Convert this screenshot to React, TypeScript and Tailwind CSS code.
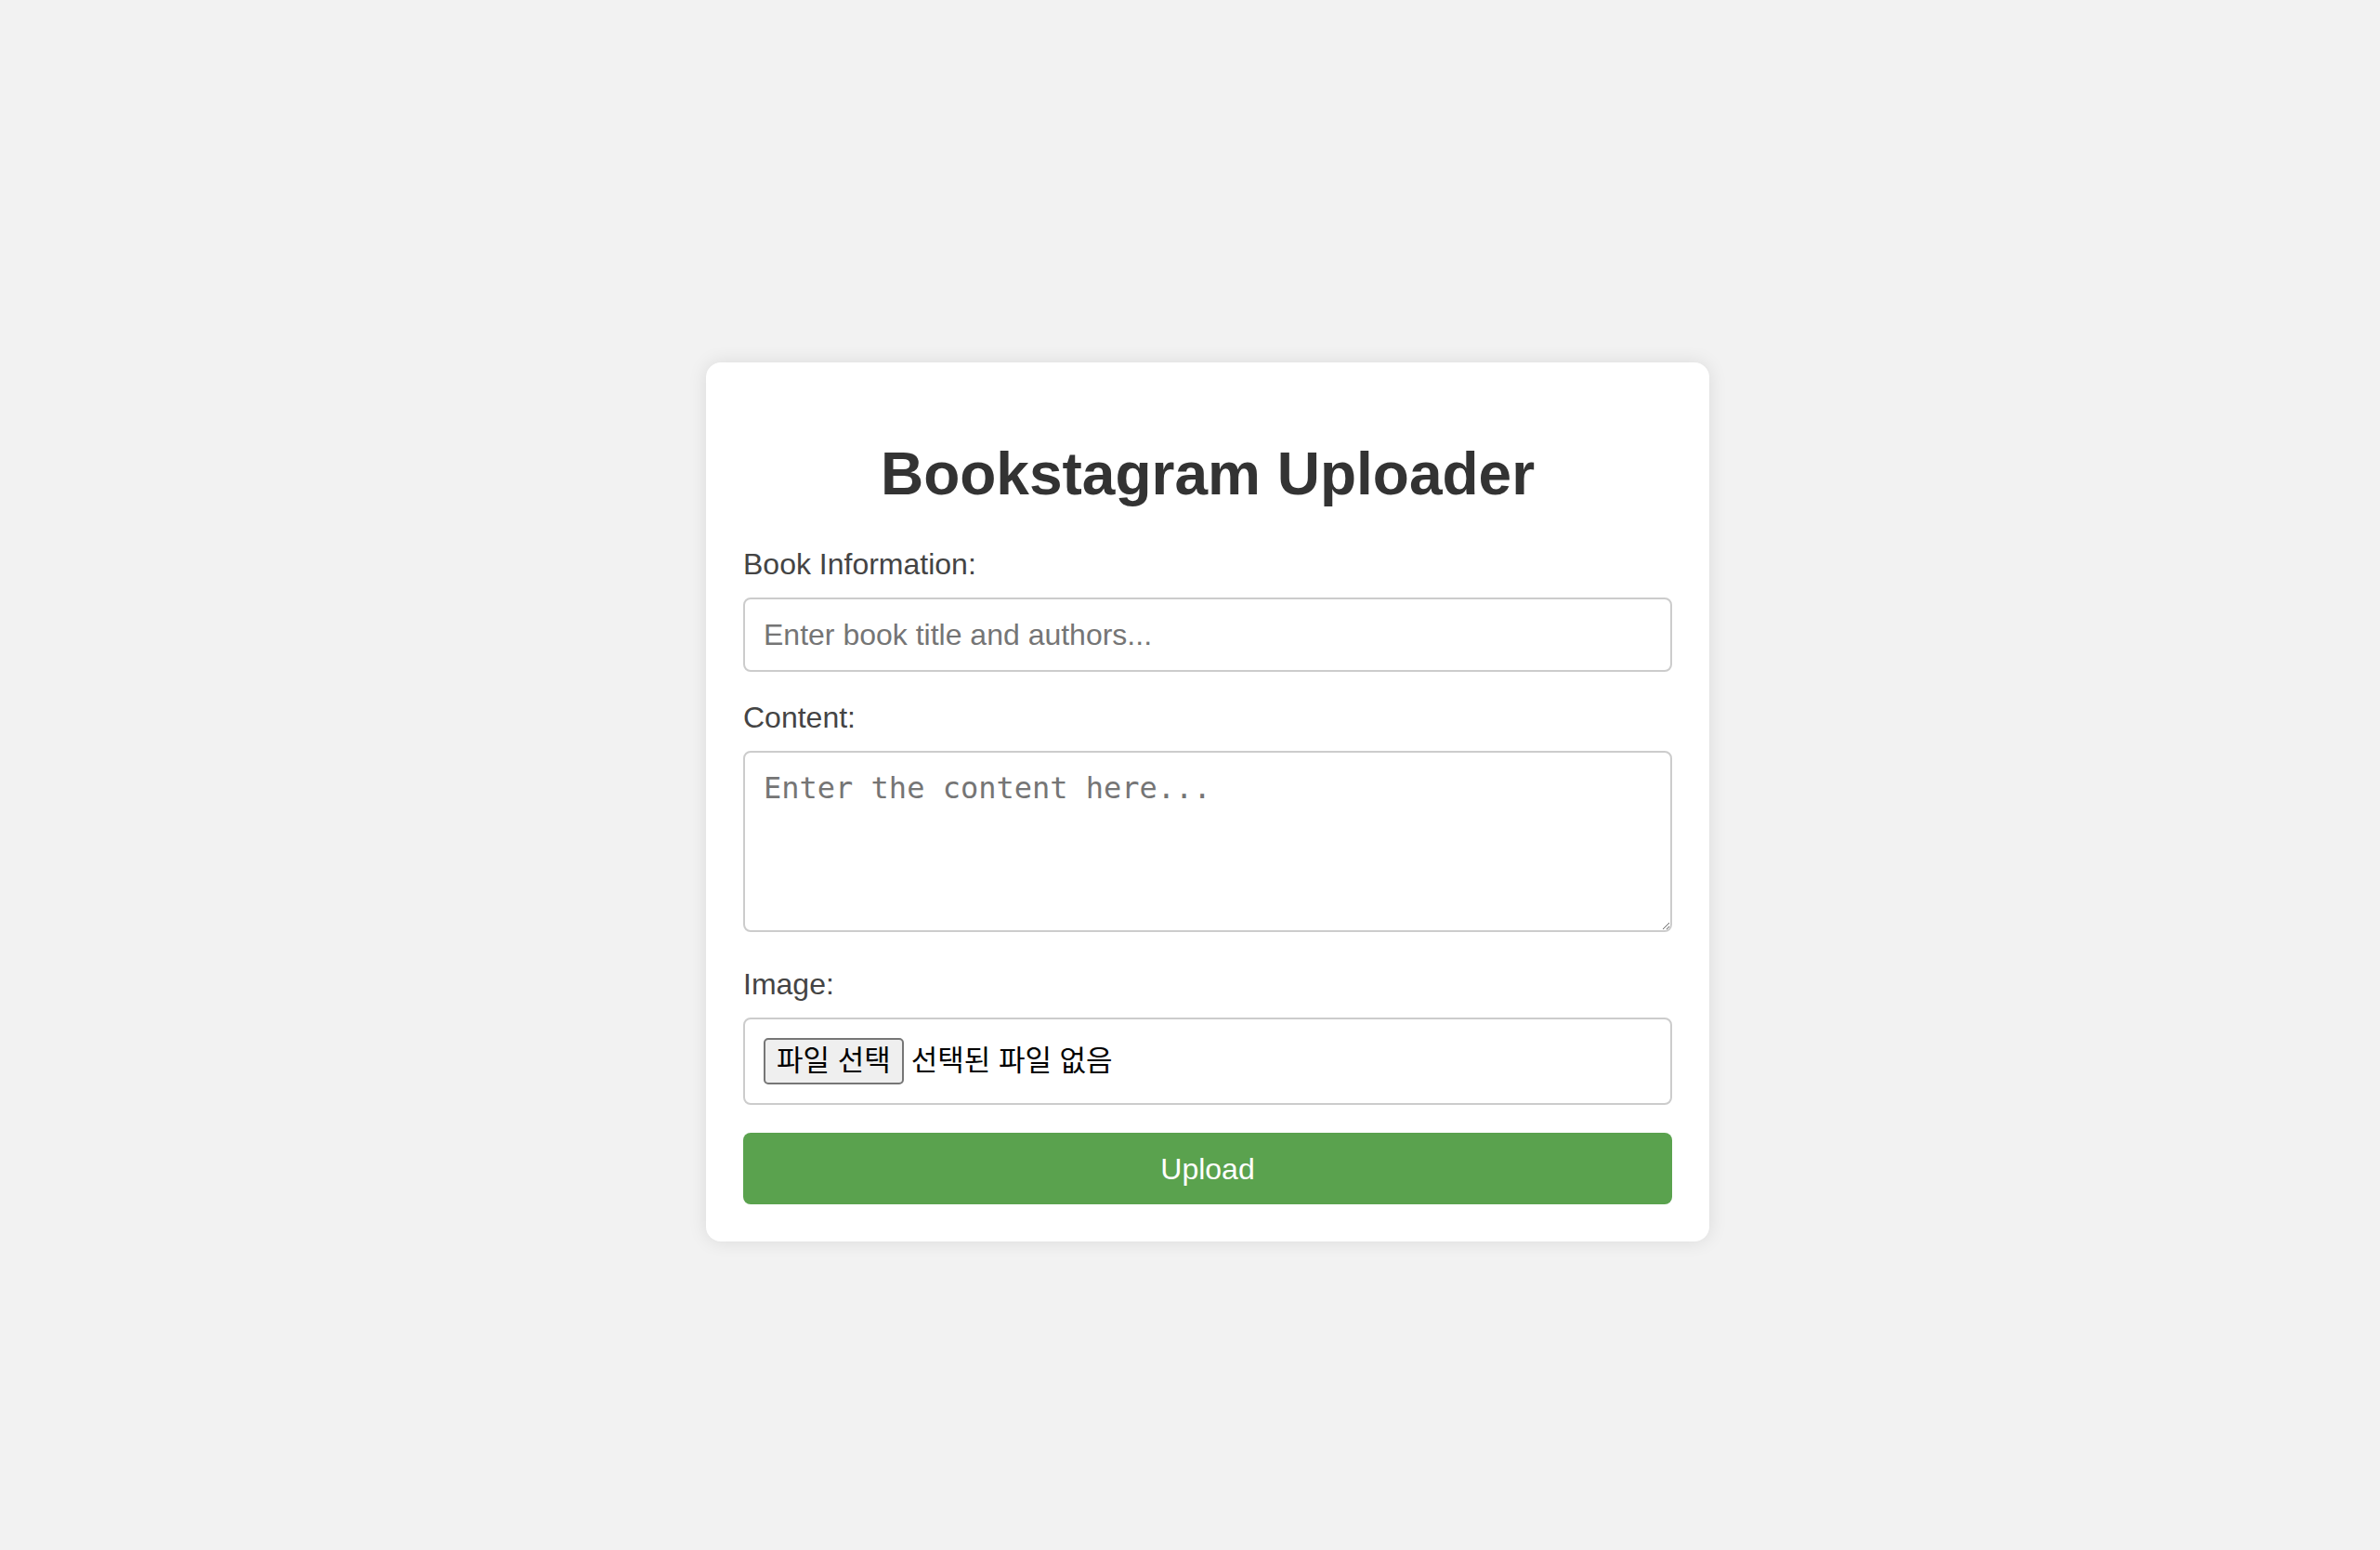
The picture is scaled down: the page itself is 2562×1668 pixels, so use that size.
import React, { useState } from 'react';

const sans = "font-['Liberation_Sans','Noto_Sans_CJK_KR',Arial,sans-serif]";

export default function App() {
  const [book, setBook] = useState('');
  const [content, setContent] = useState('');

  return (
    <div className={`min-h-screen bg-[#f2f2f2] flex items-center justify-center pl-[38px] pt-[58px] ${sans}`}>
      <div className="w-[1080px] bg-white rounded-[16px] shadow-[0_0_20px_rgba(0,0,0,0.1)] px-[40px] pt-[40px] pb-[40px]">
        <h1 className="mt-[43px] mb-[42px] text-center text-[64px] leading-[74px] font-bold text-[#333]">
          Bookstagram Uploader
        </h1>

        <label className="block text-[32px] leading-[37px] text-[#444] mb-[17px]">Book Information:</label>
        <input
          type="text"
          value={book}
          onChange={(e) => setBook(e.target.value)}
          placeholder="Enter book title and authors..."
          className={`block w-full h-[80px] px-[20px] border-2 border-[#ccc] rounded-[8px] text-[32px] text-black placeholder:text-[#757575] outline-none mb-[31px] ${sans}`}
        />

        <label className="block text-[32px] leading-[37px] text-[#444] mb-[17px]">Content:</label>
        <textarea
          value={content}
          onChange={(e) => setContent(e.target.value)}
          placeholder="Enter the content here..."
          className="block w-full h-[195px] px-[20px] py-[20px] border-2 border-[#ccc] rounded-[8px] text-[32px] leading-[37px] text-black placeholder:text-[#757575] outline-none mb-[38px] font-['DejaVu_Sans_Mono',monospace]"
        />

        <label className="block text-[32px] leading-[37px] text-[#444] mb-[17px]">Image:</label>
        <div className="flex items-center h-[94px] px-[20px] border-2 border-[#ccc] rounded-[8px] mb-[30px]">
          <button className="h-[50px] px-[12px] mr-[8px] bg-[#efefef] border-2 border-[#767676] rounded-[5px] text-[31px] leading-[40px] text-black">
            파일 선택
          </button>
          <span className="text-[31px] leading-[40px] text-black">선택된 파일 없음</span>
        </div>

        <button className="block w-full h-[77px] bg-[#5aa24e] rounded-[8px] text-white text-[32px]">
          Upload
        </button>
      </div>
    </div>
  );
}
